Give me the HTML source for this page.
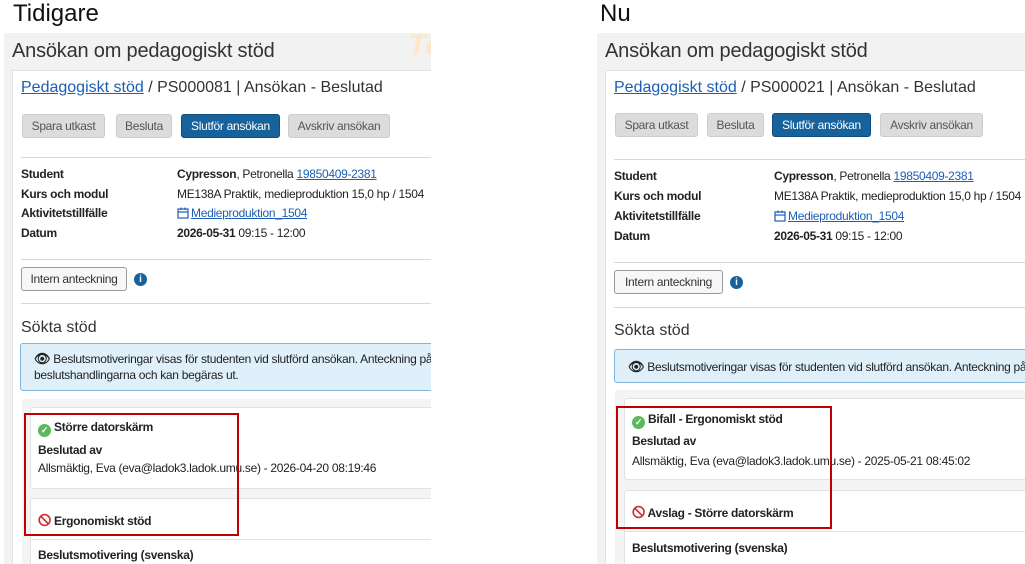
<!DOCTYPE html>
<html><head><meta charset="utf-8"><style>
*{margin:0;padding:0;box-sizing:border-box}
html,body{width:1025px;height:564px;overflow:hidden}
body{background:#fff;font-family:"Liberation Sans",Arial,sans-serif;color:#222;position:relative}
.a{position:absolute;white-space:nowrap}
.panel{position:absolute;top:33px;height:531px;background:#f2f2f2;overflow:hidden}
.card{position:absolute;background:#fff;border:1px solid #e2e2e2}
.btn{position:absolute;height:24px;border-radius:3px;background:#dcdcdc;border:1px solid #ccc;font-size:12px;letter-spacing:-0.3px;color:#555;text-align:center;line-height:22px}
.btn.p{background:#17629b;border-color:#0e4f80;color:#fff}
.hr{position:absolute;height:1px;background:#d8d8d8}
.lbl{font-size:12px;font-weight:bold;letter-spacing:-0.3px}
.val{font-size:12px;letter-spacing:-0.3px}
a{color:#1a5fb4;text-decoration:underline}
.red{position:absolute;border:2px solid #c00000}
.cal{display:inline-block;vertical-align:-2px;margin-right:2px}
</style></head><body>
<div class="a" style="left:13px;top:0;font-size:24px;color:#111">Tidigare</div>
<div class="a" style="left:600px;top:0;font-size:24px;color:#111">Nu</div>

<!-- LEFT -->
<div class="panel" style="left:4px;width:427px">
 <div class="a" style="left:8px;top:7px;font-size:20px;color:#333;letter-spacing:-0.2px">Ansökan om pedagogiskt stöd</div>
 <div class="a" style="left:404px;top:-4px;font-size:30px;font-weight:bold;font-style:italic;color:#fde7c8">To</div>
 <div class="card" style="left:8px;top:37px;width:430px;height:520px;border-right:none">
  <div class="a" style="left:8px;top:8px;font-size:16px;color:#333"><a>Pedagogiskt stöd</a> / PS000081 | Ansökan - Beslutad</div>
  <div class="btn" style="left:9px;top:43px;width:83px">Spara utkast</div>
  <div class="btn" style="left:103px;top:43px;width:56px">Besluta</div>
  <div class="btn p" style="left:168px;top:43px;width:99px">Slutför ansökan</div>
  <div class="btn" style="left:275px;top:43px;width:102px">Avskriv ansökan</div>
  <div class="hr" style="left:8px;top:86px;width:430px"></div>
  <div class="a lbl" style="left:8px;top:96px">Student</div>
  <div class="a val" style="left:164px;top:96px"><b>Cypresson</b>, Petronella <a>19850409-2381</a></div>
  <div class="a lbl" style="left:8px;top:116px">Kurs och modul</div>
  <div class="a val" style="left:164px;top:116px">ME138A Praktik, medieproduktion 15,0 hp / 1504</div>
  <div class="a lbl" style="left:8px;top:135px">Aktivitetstillfälle</div>
  <div class="a val" style="left:164px;top:135px"><svg class="cal" width="12" height="12" viewBox="0 0 12 12"><rect x="1" y="2" width="10" height="9" fill="none" stroke="#1a5fb4" stroke-width="1.2"/><line x1="1" y1="5" x2="11" y2="5" stroke="#1a5fb4" stroke-width="1.2"/><line x1="4" y1="0.5" x2="4" y2="3" stroke="#1a5fb4" stroke-width="1.2"/><line x1="8" y1="0.5" x2="8" y2="3" stroke="#1a5fb4" stroke-width="1.2"/></svg><a>Medieproduktion_1504</a></div>
  <div class="a lbl" style="left:8px;top:155px">Datum</div>
  <div class="a val" style="left:164px;top:155px"><b>2026-05-31</b> 09:15 - 12:00</div>
  <div class="hr" style="left:8px;top:188px;width:430px"></div>
  <div class="btn" style="left:8px;top:196px;width:106px;background:#f7f7f7;border-color:#999;color:#333">Intern anteckning</div>
  <div class="a" style="left:121px;top:202px;width:13px;height:13px;border-radius:50%;background:#17629b;color:#fff;font-size:10px;font-weight:bold;text-align:center;line-height:13px">i</div>
  <div class="hr" style="left:8px;top:232px;width:430px"></div>
  <div class="a" style="left:8px;top:248px;font-size:16px;color:#333">Sökta stöd</div>
  <div class="a" style="left:7px;top:272px;width:430px;height:48px;background:#dff0fa;border:1px solid #7fb6da;border-radius:3px;font-size:12px;letter-spacing:-0.3px;padding:7px 0 0 13px;line-height:16px;color:#222"><b style="font-size:13px">👁</b> Beslutsmotiveringar visas för studenten vid slutförd ansökan. Anteckning på<br>beslutshandlingarna och kan begäras ut.</div>
  <div class="a" style="left:9px;top:328px;width:430px;height:200px;background:#f4f4f4"></div>
  <div class="card" style="left:17px;top:336px;width:420px;height:82px;border-radius:3px">
   <div class="a lbl" style="left:7px;top:12px"><span style="display:inline-block;width:13px;height:13px;border-radius:50%;background:#5cb85c;color:#fff;font-size:9px;text-align:center;line-height:13px;vertical-align:-2px">✓</span> Större datorskärm</div>
   <div class="a lbl" style="left:7px;top:35px">Beslutad av</div>
   <div class="a val" style="left:7px;top:53px">Allsmäktig, Eva (eva@ladok3.ladok.umu.se) - 2026-04-20 08:19:46</div>
  </div>
  <div class="card" style="left:17px;top:427px;width:420px;height:100px;border-radius:3px">
   <div class="a lbl" style="left:7px;top:13px"><span style="color:#c9302c;font-size:13px">🛇</span> Ergonomiskt stöd</div>
   <div class="hr" style="left:0;top:40px;width:420px;background:#e2e2e2"></div>
   <div class="a lbl" style="left:7px;top:49px">Beslutsmotivering (svenska)</div>
  </div>
 </div>
</div>
<div class="red" style="left:24px;top:413px;width:215px;height:123px"></div>

<!-- RIGHT -->
<div class="panel" style="left:597px;width:428px">
 <div class="a" style="left:8px;top:7px;font-size:20px;color:#333;letter-spacing:-0.2px">Ansökan om pedagogiskt stöd</div>
 <div class="card" style="left:8px;top:37px;width:430px;height:520px;border-right:none">
  <div class="a" style="left:8px;top:8px;font-size:16px;color:#333"><a>Pedagogiskt stöd</a> / PS000021 | Ansökan - Beslutad</div>
  <div class="btn" style="left:9px;top:42px;width:83px">Spara utkast</div>
  <div class="btn" style="left:101px;top:42px;width:57px">Besluta</div>
  <div class="btn p" style="left:166px;top:42px;width:99px">Slutför ansökan</div>
  <div class="btn" style="left:274px;top:42px;width:103px">Avskriv ansökan</div>
  <div class="hr" style="left:8px;top:88px;width:430px"></div>
  <div class="a lbl" style="left:8px;top:98px">Student</div>
  <div class="a val" style="left:168px;top:98px"><b>Cypresson</b>, Petronella <a>19850409-2381</a></div>
  <div class="a lbl" style="left:8px;top:118px">Kurs och modul</div>
  <div class="a val" style="left:168px;top:118px">ME138A Praktik, medieproduktion 15,0 hp / 1504</div>
  <div class="a lbl" style="left:8px;top:138px">Aktivitetstillfälle</div>
  <div class="a val" style="left:168px;top:138px"><svg class="cal" width="12" height="12" viewBox="0 0 12 12"><rect x="1" y="2" width="10" height="9" fill="none" stroke="#1a5fb4" stroke-width="1.2"/><line x1="1" y1="5" x2="11" y2="5" stroke="#1a5fb4" stroke-width="1.2"/><line x1="4" y1="0.5" x2="4" y2="3" stroke="#1a5fb4" stroke-width="1.2"/><line x1="8" y1="0.5" x2="8" y2="3" stroke="#1a5fb4" stroke-width="1.2"/></svg><a>Medieproduktion_1504</a></div>
  <div class="a lbl" style="left:8px;top:158px">Datum</div>
  <div class="a val" style="left:168px;top:158px"><b>2026-05-31</b> 09:15 - 12:00</div>
  <div class="hr" style="left:8px;top:191px;width:430px"></div>
  <div class="btn" style="left:8px;top:199px;width:109px;background:#f7f7f7;border-color:#999;color:#333">Intern anteckning</div>
  <div class="a" style="left:124px;top:205px;width:13px;height:13px;border-radius:50%;background:#17629b;color:#fff;font-size:10px;font-weight:bold;text-align:center;line-height:13px">i</div>
  <div class="hr" style="left:8px;top:236px;width:430px"></div>
  <div class="a" style="left:8px;top:251px;font-size:16px;color:#333">Sökta stöd</div>
  <div class="a" style="left:8px;top:278px;width:430px;height:34px;background:#dff0fa;border:1px solid #7fb6da;border-radius:3px;font-size:12px;letter-spacing:-0.3px;padding:9px 0 0 13px;color:#222"><b style="font-size:13px">👁</b> Beslutsmotiveringar visas för studenten vid slutförd ansökan. Anteckning på</div>
  <div class="a" style="left:9px;top:319px;width:430px;height:210px;background:#f4f4f4"></div>
  <div class="card" style="left:18px;top:327px;width:420px;height:82px;border-radius:3px">
   <div class="a lbl" style="left:7px;top:13px"><span style="display:inline-block;width:13px;height:13px;border-radius:50%;background:#5cb85c;color:#fff;font-size:9px;text-align:center;line-height:13px;vertical-align:-2px">✓</span> Bifall - Ergonomiskt stöd</div>
   <div class="a lbl" style="left:7px;top:35px">Beslutad av</div>
   <div class="a val" style="left:7px;top:55px">Allsmäktig, Eva (eva@ladok3.ladok.umu.se) - 2025-05-21 08:45:02</div>
  </div>
  <div class="card" style="left:18px;top:419px;width:420px;height:110px;border-radius:3px">
   <div class="a lbl" style="left:7px;top:13px"><span style="color:#c9302c;font-size:13px">🛇</span> Avslag - Större datorskärm</div>
   <div class="hr" style="left:0;top:40px;width:420px;background:#e2e2e2"></div>
   <div class="a lbl" style="left:7px;top:50px">Beslutsmotivering (svenska)</div>
  </div>
 </div>
</div>
<div class="red" style="left:616px;top:406px;width:216px;height:123px"></div>
</body></html>
